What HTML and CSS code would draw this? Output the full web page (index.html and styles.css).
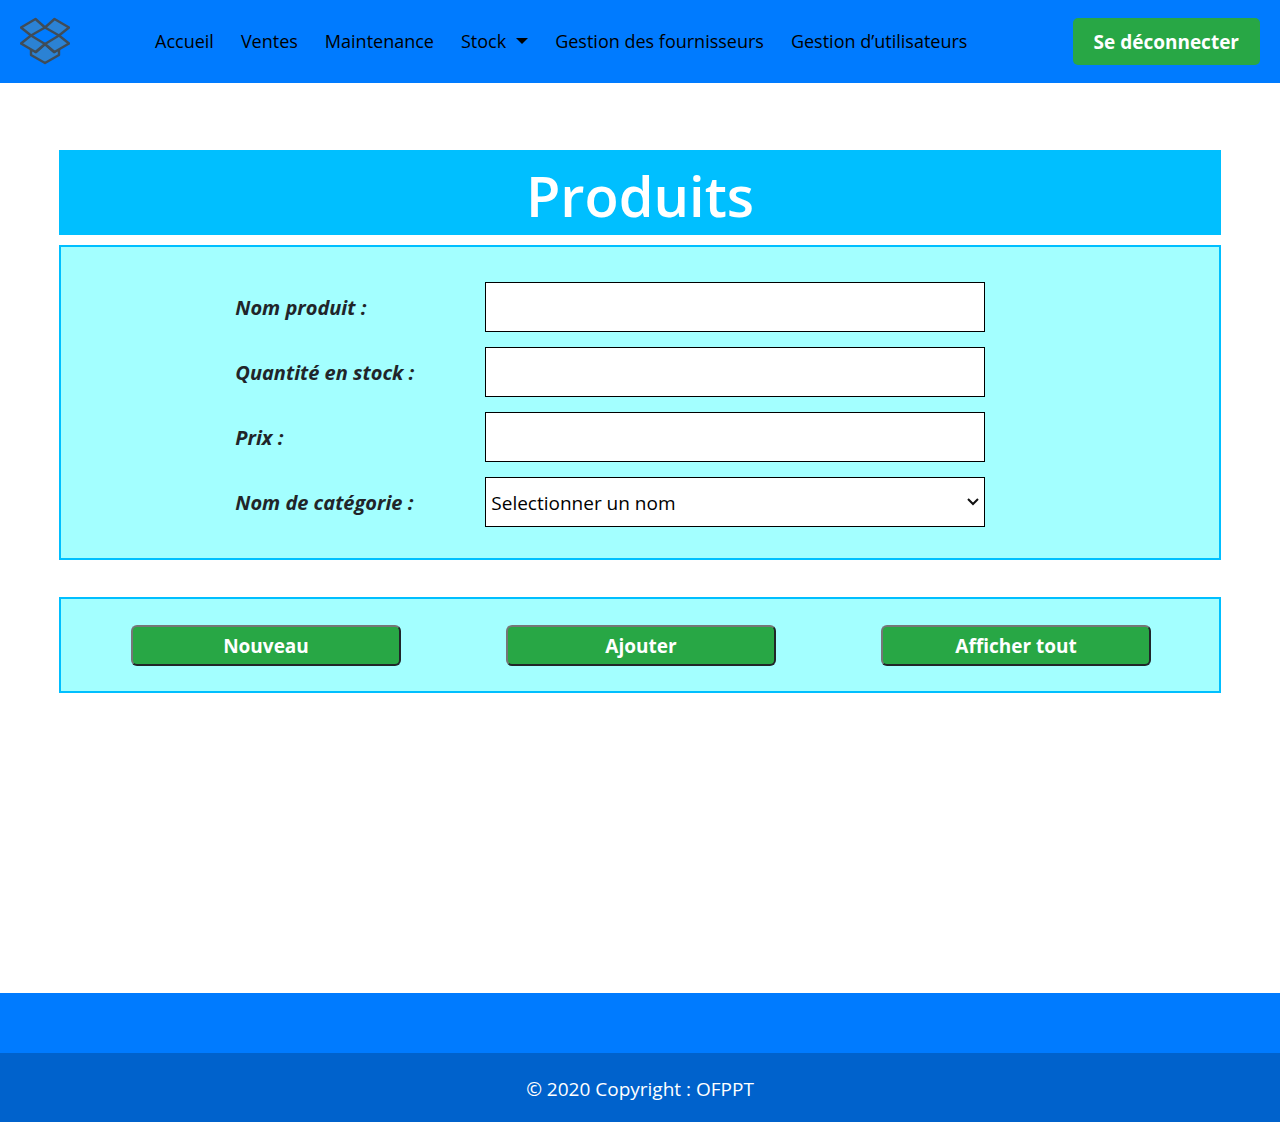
FILE: index.html
```html
<!DOCTYPE html>
<html lang="fr">
<head>
  <meta charset="utf-8">
  <meta name="viewport" content="width=device-width, initial-scale=1">
  <title>Produits</title>
  <link rel="stylesheet" href="styles.css">
</head>
<body>
  <header class="navbar">
    <a class="brand" href="#" aria-label="Accueil">
      <svg class="brand-logo" viewBox="0 2 50 50" aria-hidden="true">
        <g class="logo-shape" stroke-width="2.4">
          <path d="M11 35V41L25 49L39 41V35L34 38L25 30L16 38Z"/>
          <path d="M1 13.500L15.500 5L25 13.500L11 21.500Z"/>
          <path d="M49 13.500L34.500 5L25 13.500L39 21.500Z"/>
          <path d="M11 21.500L25 30L15.500 38L1 29.500Z"/>
          <path d="M39 21.500L25 30L34.500 38L49 29.500Z"/>
        </g>
      </svg>
    </a>
    <nav class="nav-links">
      <a href="#">Accueil</a>
      <a href="#">Ventes</a>
      <a href="#">Maintenance</a>
      <a class="dropdown" href="#">Stock</a>
      <a href="#">Gestion des fournisseurs</a>
      <a href="#">Gestion d’utilisateurs</a>
    </nav>
    <button class="logout" type="button">Se déconnecter</button>
  </header>

  <main class="content">
    <h1 class="title">Produits</h1>
    <form class="product-form">
      <div class="fields panel">
        <label for="nom">Nom produit :</label>
        <input id="nom" type="text">
        <label for="quantite">Quantité en stock :</label>
        <input id="quantite" type="text">
        <label for="prix">Prix :</label>
        <input id="prix" type="text">
        <label for="categorie">Nom de catégorie :</label>
        <select id="categorie">
          <option>Selectionner un nom</option>
        </select>
      </div>
      <div class="actions panel">
        <button type="button">Nouveau</button>
        <button type="button">Ajouter</button>
        <button type="button">Afficher tout</button>
      </div>
    </form>
  </main>

  <footer class="footer">
    <p class="copyright">© 2020 Copyright : OFPPT</p>
  </footer>
</body>
</html>
```
FILE: styles.css
```css
* {
  box-sizing: border-box;
}

body {
  display: flex;
  flex-direction: column;
  min-height: 100vh;
  margin: 0;
  background: #fff;
  color: #212529;
  font-family: "Segoe UI", "Open Sans", "Noto Sans", sans-serif;
  font-size: 19px;
  line-height: 28px;
}

.navbar {
  display: flex;
  align-items: center;
  min-height: 83px;
  padding: 16px 20px 17px;
  background: #007bff;
}

.brand,
.brand-logo {
  display: block;
  width: 50px;
  height: 50px;
}

.logo-shape {
  fill: #2b82d4;
  stroke: #3f4c58;
  stroke-linejoin: round;
}

.nav-links {
  display: flex;
  flex-wrap: wrap;
  gap: 27px;
  margin-left: 85px;
}

.nav-links a {
  color: #000;
  font-size: 18px;
  font-weight: 500;
  text-decoration: none;
}

.dropdown {
  display: flex;
  align-items: center;
  gap: 10px;
}

.dropdown::after {
  content: "";
  border: 6px solid transparent;
  border-top-color: #000;
  border-bottom: 0;
}

.logout {
  margin-left: auto;
  padding: 10px 21px 9px;
  border: 0;
  border-radius: 5px;
  background: #28a745;
  color: #fff;
  font: inherit;
  font-weight: 700;
}

.content {
  padding: 67px 59px;
}

.title {
  margin: 0 0 10px;
  padding-top: 5px;
  background: #00bfff;
  color: #fff;
  font-size: 56px;
  font-weight: 600;
  line-height: 80px;
  text-align: center;
}

.panel {
  border: 2px solid #00bfff;
  background: #a3ffff;
}

.fields {
  display: grid;
  grid-template-columns: 250px minmax(0, 500px);
  align-items: center;
  gap: 15px 0;
  padding: 35px 20px 31px 15%;
}

.fields label {
  padding-top: 2px;
  font-size: 20px;
  font-style: italic;
  font-weight: 700;
}

.fields input,
.fields select {
  width: 100%;
  height: 50px;
  padding: 2px 5px 0;
  border: 1px solid #000;
  border-radius: 0;
  background: #fff;
  color: #000;
  font: inherit;
}

.fields select {
  appearance: none;
  background: #fff url("data:image/svg+xml,%3Csvg xmlns='http://www.w3.org/2000/svg' width='12' height='8'%3E%3Cpath d='M1 1l5 5 5-5' fill='none' stroke='%23111' stroke-width='2'/%3E%3C/svg%3E") no-repeat right 5px center;
}

.actions {
  display: flex;
  flex-wrap: wrap;
  justify-content: space-between;
  gap: 20px;
  margin-top: 37px;
  padding: 26px 68px 25px 70px;
}

.actions button {
  width: 270px;
  height: 41px;
  padding: 0;
  border: 2px solid;
  border-color: #767676 #212529 #212529 #767676;
  border-radius: 6px;
  background: #28a745;
  color: #fff;
  font: inherit;
  font-weight: 700;
}

.footer {
  margin-top: auto;
  padding-top: 60px;
  background: #007bff;
}

.copyright {
  margin: 0;
  padding: 22px 20px 19px;
  background: #0062cc;
  color: #fff;
  text-align: center;
}
```
